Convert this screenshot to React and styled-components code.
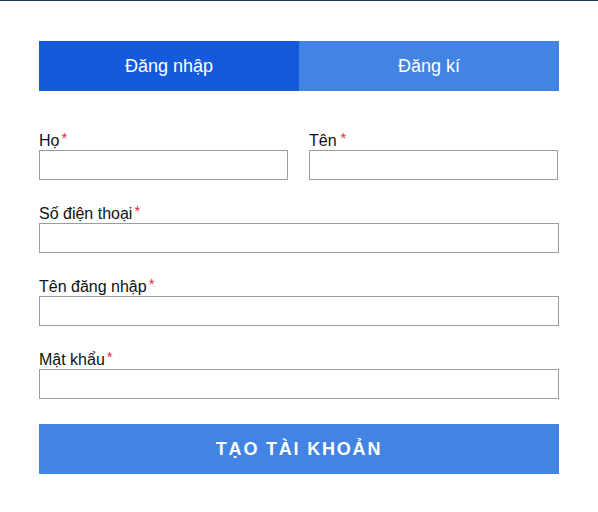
import React from "react";
import styled, { createGlobalStyle } from "styled-components";

const Global = createGlobalStyle`
  html, body { margin: 0; padding: 0; background: #fff; }
  body { font-family: "Liberation Sans", Arial, sans-serif; }
  * { box-sizing: border-box; }
`;

const Page = styled.div`
  width: 598px;
  min-height: 512px;
  border-top: 1px solid #1c3553;
  padding: 40px 39px 0 39px;
  background: #fff;
`;

const Tabs = styled.div`
  display: grid;
  grid-template-columns: 260px 260px;
  height: 50px;
`;

const Tab = styled.button`
  border: none;
  margin: 0;
  padding: 0;
  background: ${(p) => (p.$active ? "#135bdc" : "#4283e3")};
  color: #fff;
  font-family: "Liberation Sans", Arial, sans-serif;
  font-size: 18px;
  display: flex;
  align-items: center;
  justify-content: center;
  cursor: pointer;
`;

const Form = styled.form`
  margin-top: 41px;
  display: flex;
  flex-direction: column;
  gap: 25px;
`;

const Row = styled.div`
  display: grid;
  grid-template-columns: 249px 249px;
  column-gap: 21px;
`;

const Field = styled.div`
  display: flex;
  flex-direction: column;
`;

const Label = styled.label`
  display: block;
  font-size: 16px;
  line-height: 18px;
  color: #111;
`;

const Star = styled.span`
  color: #e3283a;
  font-size: 15px;
  line-height: 0;
  margin-left: ${(p) => (p.$gap ? "4px" : "2px")};
  vertical-align: 3px;
`;

const Input = styled.input`
  height: 30px;
  width: 100%;
  border: 1px solid #94a0a0;
  border-radius: 0;
  padding: 0 6px;
  font-size: 15px;
  font-family: "Liberation Sans", Arial, sans-serif;
  outline: none;
  background: #fff;
`;

const Submit = styled.button`
  height: 50px;
  width: 520px;
  border: none;
  background: #4283e3;
  color: #fff;
  font-family: "Liberation Sans", Arial, sans-serif;
  font-weight: bold;
  font-size: 18px;
  letter-spacing: 1.8px;
  cursor: pointer;
`;

function F({ label, gap }) {
  return (
    <Field>
      <Label>
        {label}
        <Star $gap={gap}>*</Star>
      </Label>
      <Input type="text" />
    </Field>
  );
}

export default function App() {
  return (
    <>
      <Global />
      <Page>
        <Tabs>
          <Tab $active>Đăng nhập</Tab>
          <Tab>Đăng kí</Tab>
        </Tabs>
        <Form onSubmit={(e) => e.preventDefault()}>
          <Row>
            <F label="Họ" />
            <F label="Tên" gap />
          </Row>
          <F label="Số điện thoại" />
          <F label="Tên đăng nhập" />
          <F label="Mật khẩu" />
          <Submit type="submit">TẠO TÀI KHOẢN</Submit>
        </Form>
      </Page>
    </>
  );
}
